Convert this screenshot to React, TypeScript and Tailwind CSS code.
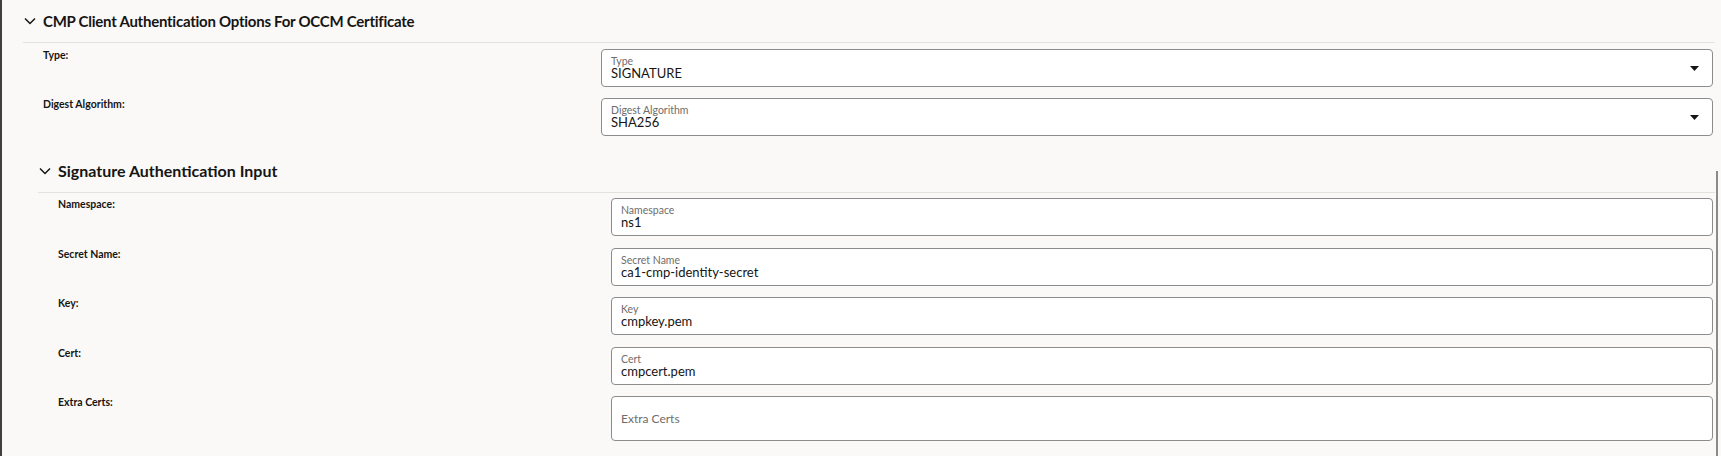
import React from 'react';

type Field = {
  label: string;
  inner: string;
  value?: string;
  select?: boolean;
  tall?: boolean;
  gapAfter?: string;
};

const authFields: Field[] = [
  { label: 'Type:', inner: 'Type', value: 'SIGNATURE', select: true, gapAfter: 'mb-[11px]' },
  { label: 'Digest Algorithm:', inner: 'Digest Algorithm', value: 'SHA256', select: true },
];

const signatureFields: Field[] = [
  { label: 'Namespace:', inner: 'Namespace', value: 'ns1', gapAfter: 'mb-[12px]' },
  { label: 'Secret Name:', inner: 'Secret Name', value: 'ca1-cmp-identity-secret', gapAfter: 'mb-[11px]' },
  { label: 'Key:', inner: 'Key', value: 'cmpkey.pem', gapAfter: 'mb-[12px]' },
  { label: 'Cert:', inner: 'Cert', value: 'cmpcert.pem', gapAfter: 'mb-[11px]' },
  { label: 'Extra Certs:', inner: 'Extra Certs', tall: true },
];

const Chevron = () => (
  <svg width="12" height="8" viewBox="0 0 12 8" className="shrink-0">
    <polyline points="1,1.5 6,6.5 11,1.5" fill="none" stroke="#161513" strokeWidth="1.5" />
  </svg>
);

const Caret = () => (
  <svg width="9" height="5" viewBox="0 0 9 5" className="mr-[13px] shrink-0">
    <polygon points="0,0 9,0 4.5,5" fill="#161513" />
  </svg>
);

const InputBox = ({ field }: { field: Field }) => {
  if (field.tall) {
    return (
      <div className="flex h-[45px] flex-1 items-center rounded-[4px] border border-[#8c8c8c] bg-white pl-[9px]">
        <span className="text-[12px] leading-[14px] text-[#6f6d6b]">{field.inner}</span>
      </div>
    );
  }
  return (
    <div className="flex h-[38px] flex-1 items-center rounded-[4px] border border-[#8c8c8c] bg-white pl-[9px]">
      <div className="flex flex-1 flex-col self-stretch pt-[6px]">
        <div className="text-[10.5px] leading-[11px] text-[#6f6d6b]">{field.inner}</div>
        <div className="text-[13px] leading-[12px] text-[#161513]">{field.value}</div>
      </div>
      {field.select && <Caret />}
    </div>
  );
};

const Section = ({
  title,
  titleClass,
  fields,
  labelWidth,
  className,
  rowsPad,
}: {
  title: string;
  titleClass: string;
  fields: Field[];
  labelWidth: string;
  className: string;
  rowsPad: string;
}) => (
  <section className={className}>
    <div className="flex h-[43px] items-center gap-[7px] border-b border-[#e4e2df] pl-[1px]">
      <Chevron />
      <h2 className={`font-bold leading-[20px] text-[#161513] ${titleClass}`}>{title}</h2>
    </div>
    <div className={`flex flex-col pr-[2px] ${rowsPad}`}>
      {fields.map((f) => (
        <div key={f.label} className={`flex items-start ${f.gapAfter ?? ''}`}>
          <div className={`${labelWidth} shrink-0 pl-[20px] text-[10.5px] font-bold leading-[13px] text-[#161513]`}>
            {f.label}
          </div>
          <InputBox field={f} />
        </div>
      ))}
    </div>
  </section>
);

const App: React.FC = () => {
  return (
    <div className="relative h-[456px] w-full overflow-hidden border-l-2 border-[#404040] bg-[#faf9f8] font-[family-name:Lato,sans-serif]">
      <Section
        title="CMP Client Authentication Options For OCCM Certificate"
        titleClass="text-[15px] tracking-[-0.25px]"
        fields={authFields}
        labelWidth="w-[578px]"
        className="ml-[21px] mr-[6px]"
        rowsPad="pt-[6px]"
      />
      <Section
        title="Signature Authentication Input"
        titleClass="text-[16px]"
        fields={signatureFields}
        labelWidth="w-[573px]"
        className="ml-[36px] mr-[6px] mt-[14px]"
        rowsPad="pt-[5px]"
      />
      {/* scrollbar thumb */}
      <div className="absolute bottom-0 right-[3px] top-[171px] w-[2px] bg-[#8a8a8a]" />
    </div>
  );
};

export default App;
